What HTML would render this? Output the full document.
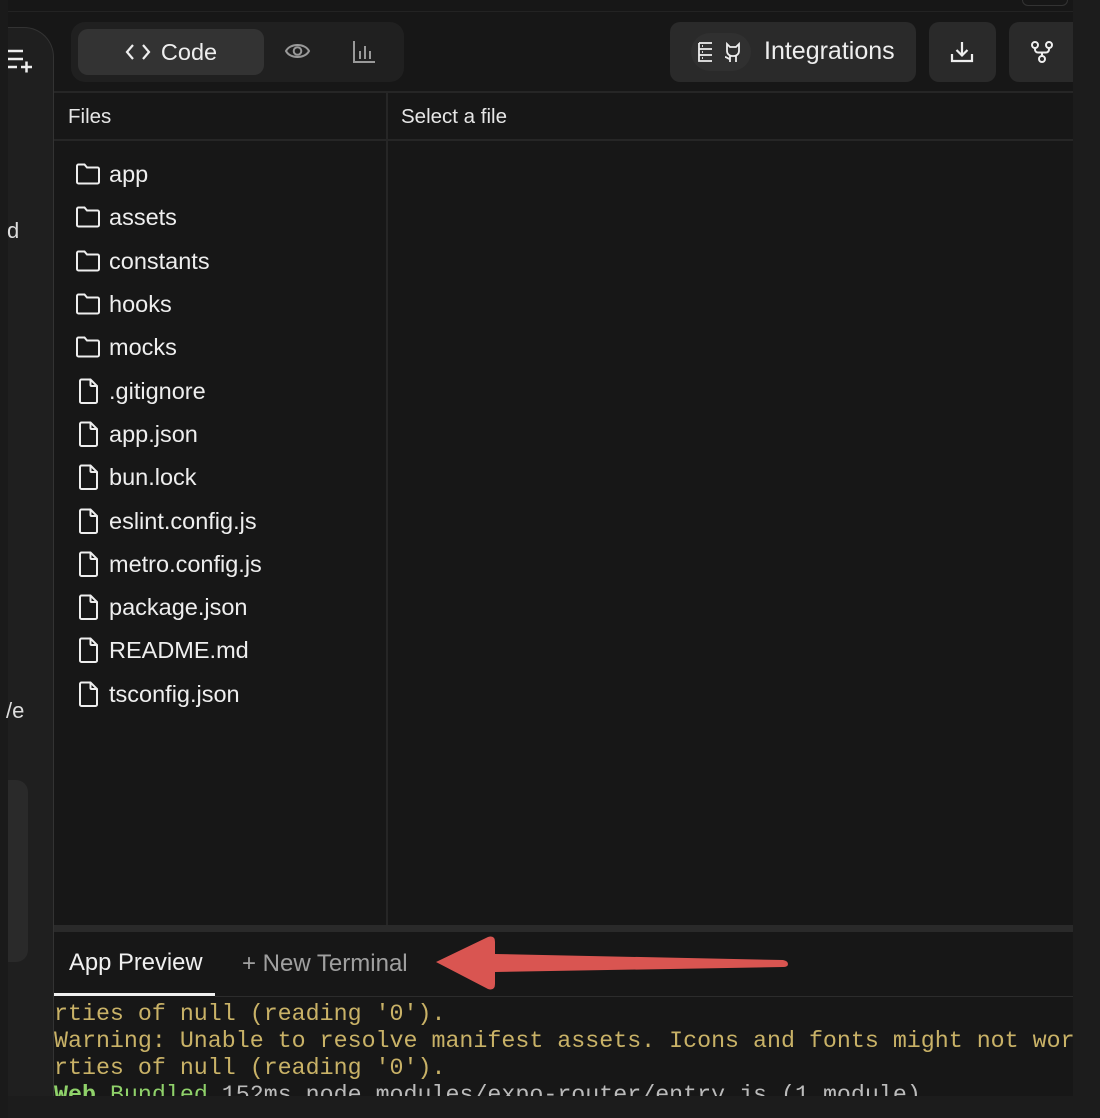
<!DOCTYPE html>
<html><head><meta charset="utf-8"><style>
*{margin:0;padding:0;box-sizing:border-box}
body{width:1100px;height:1118px;background:#1c1c1c;position:relative;overflow:hidden;font-family:"Liberation Sans",sans-serif;color:#e8e8e8}
.abs{position:absolute}
.main{left:8px;top:0;width:1065px;height:1096px;background:#171717}
.strip{left:0;top:0;width:8px;height:1118px;background:#1a1a1a}
.lp{left:8px;top:27px;width:46px;height:1069px;background:#1f1f1f;border-top:1px solid #333;border-right:1px solid #333;border-top-right-radius:30px}
.hline{height:2px;background:#262626}
.seg{left:71px;top:22px;width:333px;height:60px;background:#202020;border-radius:14px}
.code{left:78px;top:29px;width:186px;height:46px;background:#333;border-radius:10px;font-size:23.5px;color:#eee;display:flex;align-items:center;justify-content:center;gap:10px}
.btn{background:#2a2a2a;border-radius:8px}
.fl{left:75px;font-size:23.5px;color:#eee;display:flex;align-items:center;height:30px}
.fl svg{margin-right:8px}
.term{left:0;font-family:"Liberation Mono",monospace;font-size:23.3px;color:#c9b267;white-space:pre;line-height:27px}
</style></head><body>
<div class="abs strip"></div>
<div class="abs main"></div>
<div class="abs hline" style="left:8px;top:11px;width:1065px;height:1px;background:#232323"></div>
<div class="abs" style="left:1022px;top:-10px;width:46px;height:16px;border:1px solid #333;border-radius:6px"></div>
<div class="abs lp"></div>
<div class="abs" style="left:8px;top:780px;width:20px;height:182px;background:#2a2a2a;border-radius:0 12px 12px 0"></div>
<svg class="abs" style="left:8px;top:46px" width="26" height="28" viewBox="0 0 26 28"><path d="M0 5h15M0 13h15M0 21h9M13 21h11M18.5 15.5v11" stroke="#eee" stroke-width="2.5" fill="none"/></svg>
<div class="abs" style="left:7px;top:218px;font-size:22px;color:#ddd">d</div>
<div class="abs" style="left:6px;top:698px;font-size:22px;color:#ddd">/e</div>

<div class="abs seg"></div>
<div class="abs code"><svg width="26" height="20" viewBox="0 0 26 20"><path d="M8 3L2 10l6 7M18 3l6 7-6 7" stroke="#eee" stroke-width="2.2" fill="none"/></svg>Code</div>
<svg class="abs" style="left:284px;top:40px" width="27" height="22" viewBox="0 0 27 22"><path d="M2 11C6 3 21 3 25 11C21 19 6 19 2 11Z" stroke="#999" stroke-width="2" fill="none"/><circle cx="13.5" cy="11" r="3.8" stroke="#999" stroke-width="2" fill="none"/></svg>
<svg class="abs" style="left:352px;top:40px" width="24" height="24" viewBox="0 0 24 24"><path d="M2 1v21h21M8 11v8M13 6v13M18 11v8" stroke="#999" stroke-width="2" fill="none"/></svg>

<div class="abs btn" style="left:670px;top:22px;width:246px;height:60px;border-radius:10px"></div>
<div class="abs" style="left:691px;top:33px;width:60px;height:38px;background:#303030;border-radius:19px"></div>
<svg class="abs" style="left:697px;top:41px" width="48" height="22" viewBox="0 0 48 22"><path d="M2 2h13M2 2v18h13M2 8h13M2 14h13M5 5h1M5 11h1M5 17h1" stroke="#eee" stroke-width="1.8" fill="none"/><path d="M30 3l3 3h6l3-3v7a5 5 0 0 1-5 5h-2a5 5 0 0 1-5-5zM33 15v6M39 15v6M28 16c2 0 3 2 5 2" stroke="#eee" stroke-width="1.8" fill="none"/></svg>
<div class="abs" style="left:764px;top:37px;font-size:25px;color:#eee">Integrations</div>
<div class="abs btn" style="left:929px;top:22px;width:67px;height:60px;border-radius:10px"></div>
<svg class="abs" style="left:950px;top:40px" width="24" height="24" viewBox="0 0 24 24"><path d="M12 2v13M6.5 10l5.5 5.5 5.5-5.5M2 14v7h20v-7" stroke="#eee" stroke-width="2.2" fill="none"/></svg>
<div class="abs btn" style="left:1009px;top:22px;width:64px;height:60px;border-radius:10px 0 0 10px"></div>
<svg class="abs" style="left:1030px;top:40px" width="24" height="24" viewBox="0 0 24 24"><circle cx="5" cy="5" r="3" stroke="#eee" stroke-width="2" fill="none"/><circle cx="19" cy="5" r="3" stroke="#eee" stroke-width="2" fill="none"/><circle cx="12" cy="19" r="3" stroke="#eee" stroke-width="2" fill="none"/><path d="M5 8v1.5a3 3 0 0 0 3 3h8a3 3 0 0 0 3-3V8M12 12.5V16" stroke="#eee" stroke-width="2" fill="none"/></svg>

<div class="abs hline" style="left:54px;top:91px;width:1019px"></div>
<div class="abs hline" style="left:54px;top:139px;width:1019px"></div>
<div class="abs" style="left:386px;top:92px;width:2px;height:834px;background:#262626"></div>
<div class="abs" style="left:68px;top:105px;font-size:20.5px;color:#e6e6e6">Files</div>
<div class="abs" style="left:401px;top:105px;font-size:20.5px;color:#e6e6e6">Select a file</div>

<div class="abs fl" style="top:159px"><svg width="26" height="22" viewBox="0 0 26 22"><path d="M2 3a1.5 1.5 0 0 1 1.5-1.5h6l2.5 3h10.5A1.5 1.5 0 0 1 24 6v13a1.5 1.5 0 0 1-1.5 1.5h-19A1.5 1.5 0 0 1 2 19z" stroke="#eee" stroke-width="2" fill="none"/></svg>app</div>
<div class="abs fl" style="top:202px"><svg width="26" height="22" viewBox="0 0 26 22"><path d="M2 3a1.5 1.5 0 0 1 1.5-1.5h6l2.5 3h10.5A1.5 1.5 0 0 1 24 6v13a1.5 1.5 0 0 1-1.5 1.5h-19A1.5 1.5 0 0 1 2 19z" stroke="#eee" stroke-width="2" fill="none"/></svg>assets</div>
<div class="abs fl" style="top:246px"><svg width="26" height="22" viewBox="0 0 26 22"><path d="M2 3a1.5 1.5 0 0 1 1.5-1.5h6l2.5 3h10.5A1.5 1.5 0 0 1 24 6v13a1.5 1.5 0 0 1-1.5 1.5h-19A1.5 1.5 0 0 1 2 19z" stroke="#eee" stroke-width="2" fill="none"/></svg>constants</div>
<div class="abs fl" style="top:289px"><svg width="26" height="22" viewBox="0 0 26 22"><path d="M2 3a1.5 1.5 0 0 1 1.5-1.5h6l2.5 3h10.5A1.5 1.5 0 0 1 24 6v13a1.5 1.5 0 0 1-1.5 1.5h-19A1.5 1.5 0 0 1 2 19z" stroke="#eee" stroke-width="2" fill="none"/></svg>hooks</div>
<div class="abs fl" style="top:332px"><svg width="26" height="22" viewBox="0 0 26 22"><path d="M2 3a1.5 1.5 0 0 1 1.5-1.5h6l2.5 3h10.5A1.5 1.5 0 0 1 24 6v13a1.5 1.5 0 0 1-1.5 1.5h-19A1.5 1.5 0 0 1 2 19z" stroke="#eee" stroke-width="2" fill="none"/></svg>mocks</div>
<div class="abs fl" style="top:376px;left:77px"><svg width="24" height="26" viewBox="0 0 24 26"><path d="M3 3a1.5 1.5 0 0 1 1.5-1.5h9L20 8v15.5a1.5 1.5 0 0 1-1.5 1.5h-14A1.5 1.5 0 0 1 3 23.5zM13.5 1.5V7a1 1 0 0 0 1 1H20" stroke="#eee" stroke-width="2" fill="none"/></svg>.gitignore</div>
<div class="abs fl" style="top:419px;left:77px"><svg width="24" height="26" viewBox="0 0 24 26"><path d="M3 3a1.5 1.5 0 0 1 1.5-1.5h9L20 8v15.5a1.5 1.5 0 0 1-1.5 1.5h-14A1.5 1.5 0 0 1 3 23.5zM13.5 1.5V7a1 1 0 0 0 1 1H20" stroke="#eee" stroke-width="2" fill="none"/></svg>app.json</div>
<div class="abs fl" style="top:462px;left:77px"><svg width="24" height="26" viewBox="0 0 24 26"><path d="M3 3a1.5 1.5 0 0 1 1.5-1.5h9L20 8v15.5a1.5 1.5 0 0 1-1.5 1.5h-14A1.5 1.5 0 0 1 3 23.5zM13.5 1.5V7a1 1 0 0 0 1 1H20" stroke="#eee" stroke-width="2" fill="none"/></svg>bun.lock</div>
<div class="abs fl" style="top:506px;left:77px"><svg width="24" height="26" viewBox="0 0 24 26"><path d="M3 3a1.5 1.5 0 0 1 1.5-1.5h9L20 8v15.5a1.5 1.5 0 0 1-1.5 1.5h-14A1.5 1.5 0 0 1 3 23.5zM13.5 1.5V7a1 1 0 0 0 1 1H20" stroke="#eee" stroke-width="2" fill="none"/></svg>eslint.config.js</div>
<div class="abs fl" style="top:549px;left:77px"><svg width="24" height="26" viewBox="0 0 24 26"><path d="M3 3a1.5 1.5 0 0 1 1.5-1.5h9L20 8v15.5a1.5 1.5 0 0 1-1.5 1.5h-14A1.5 1.5 0 0 1 3 23.5zM13.5 1.5V7a1 1 0 0 0 1 1H20" stroke="#eee" stroke-width="2" fill="none"/></svg>metro.config.js</div>
<div class="abs fl" style="top:592px;left:77px"><svg width="24" height="26" viewBox="0 0 24 26"><path d="M3 3a1.5 1.5 0 0 1 1.5-1.5h9L20 8v15.5a1.5 1.5 0 0 1-1.5 1.5h-14A1.5 1.5 0 0 1 3 23.5zM13.5 1.5V7a1 1 0 0 0 1 1H20" stroke="#eee" stroke-width="2" fill="none"/></svg>package.json</div>
<div class="abs fl" style="top:635px;left:77px"><svg width="24" height="26" viewBox="0 0 24 26"><path d="M3 3a1.5 1.5 0 0 1 1.5-1.5h9L20 8v15.5a1.5 1.5 0 0 1-1.5 1.5h-14A1.5 1.5 0 0 1 3 23.5zM13.5 1.5V7a1 1 0 0 0 1 1H20" stroke="#eee" stroke-width="2" fill="none"/></svg>README.md</div>
<div class="abs fl" style="top:679px;left:77px"><svg width="24" height="26" viewBox="0 0 24 26"><path d="M3 3a1.5 1.5 0 0 1 1.5-1.5h9L20 8v15.5a1.5 1.5 0 0 1-1.5 1.5h-14A1.5 1.5 0 0 1 3 23.5zM13.5 1.5V7a1 1 0 0 0 1 1H20" stroke="#eee" stroke-width="2" fill="none"/></svg>tsconfig.json</div>

<div class="abs" style="left:54px;top:925px;width:1019px;height:7px;background:#2a2a2a"></div>
<div class="abs" style="left:69px;top:949px;font-size:23.8px;color:#f0f0f0">App Preview</div>
<div class="abs" style="left:242px;top:950px;font-size:24px;color:#a0a0a0">+ New Terminal</div>
<div class="abs" style="left:54px;top:993px;width:161px;height:3px;background:#f0f0f0"></div>
<div class="abs" style="left:215px;top:996px;width:858px;height:1px;background:#2c2c2c"></div>
<svg class="abs" style="left:430px;top:934px" width="362" height="58" viewBox="0 0 362 58"><path d="M6 28L58 3Q65 1 65 8V20L353 26Q358 27 358 30Q358 33 353 33L65 38V50Q65 57 58 55Z" fill="#d95551"/></svg>

<div class="abs" style="left:54px;top:999px;width:1019px;height:97px;overflow:hidden">
<div class="term" style="top:2px;position:absolute">rties of null (reading '0').
Warning: Unable to resolve manifest assets. Icons and fonts might not wor
rties of null (reading '0').
<span style="color:#8fd16a;font-weight:bold">Web</span> <span style="color:#8fd16a">Bundled</span> <span style="color:#bbb">152ms node_modules/expo-router/entry.js (1 module)</span></div>
</div>
</body></html>
